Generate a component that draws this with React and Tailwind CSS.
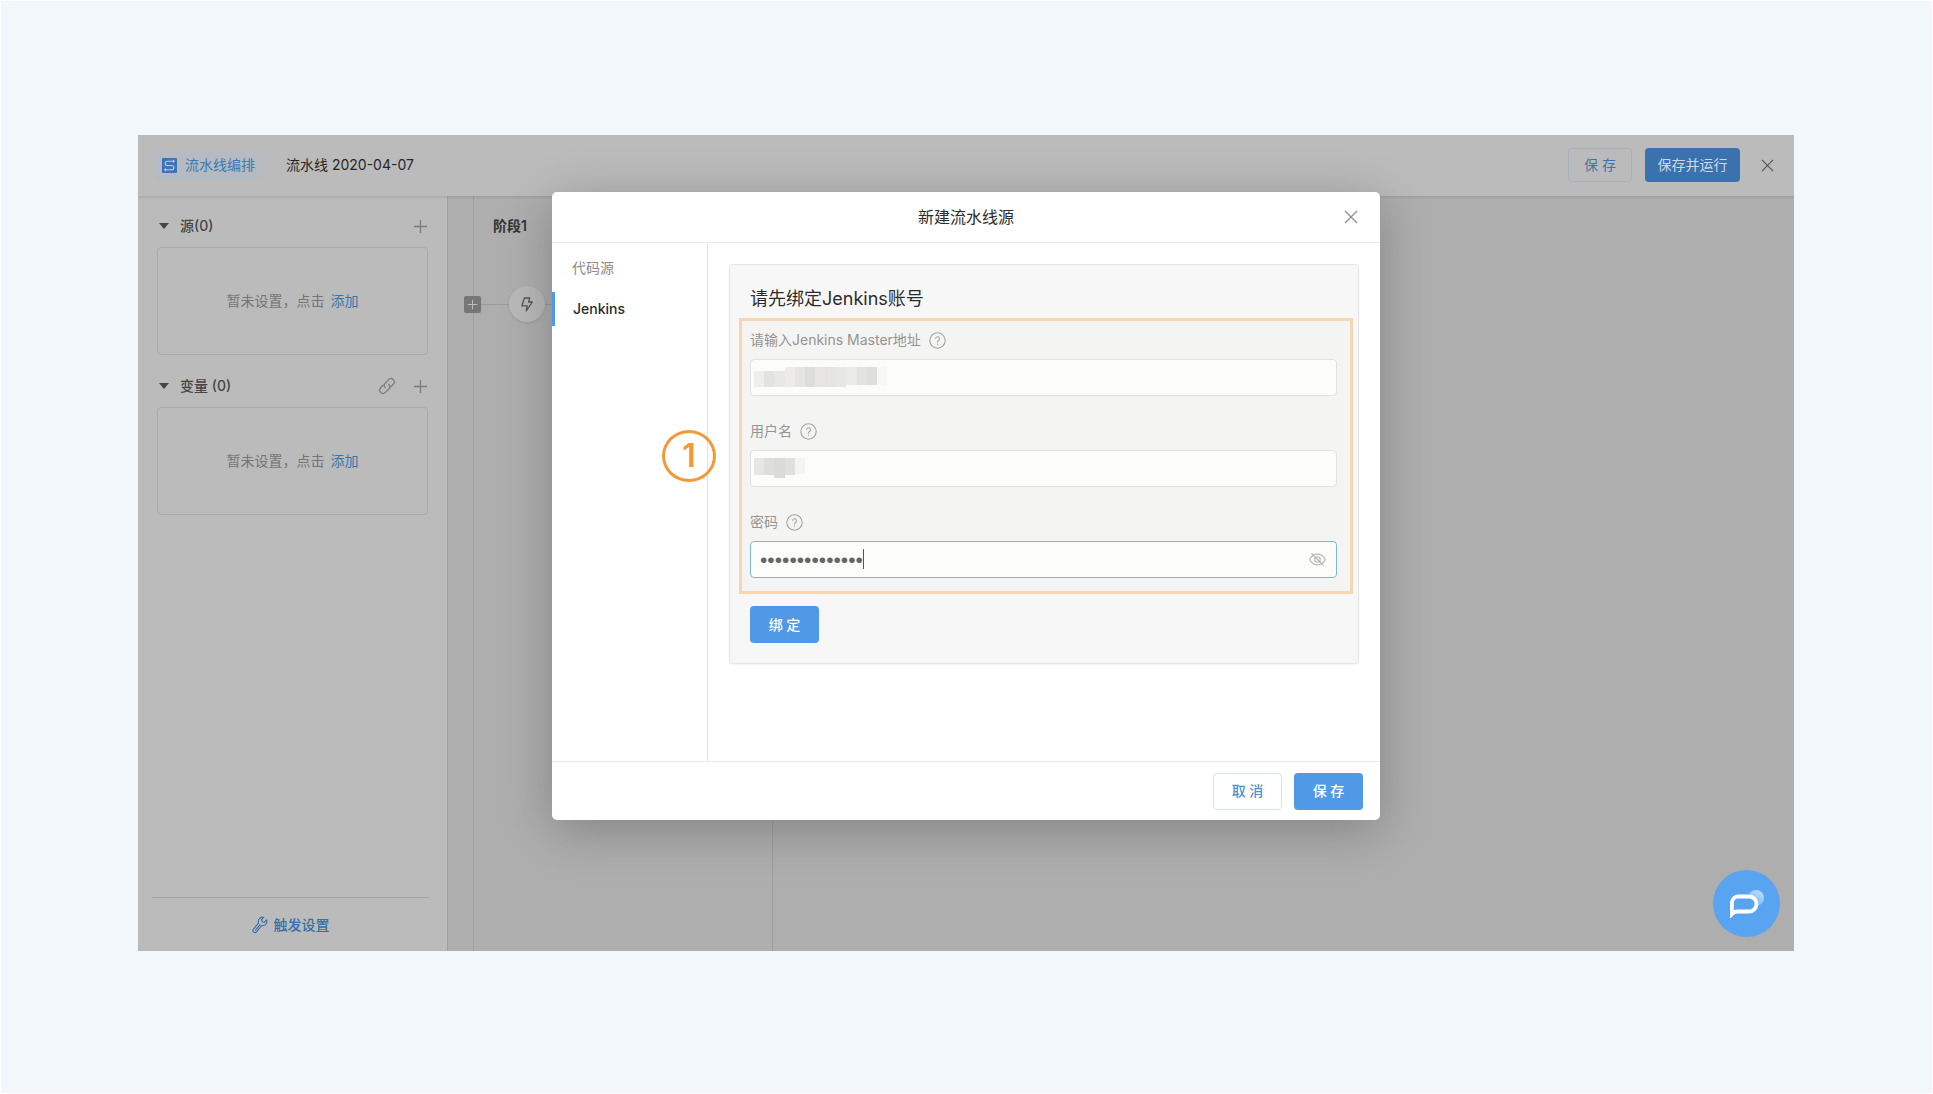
import React, { useState } from "react";

function Plus({ className }) {
  return (
    <svg viewBox="0 0 16 16" className={className} fill="none" stroke="currentColor" strokeWidth="1.4" aria-hidden="true">
      <path d="M8 1v14M1 8h14" />
    </svg>
  );
}

function Close({ className }) {
  return (
    <svg viewBox="0 0 14 14" className={className} fill="none" stroke="currentColor" strokeWidth="1.3" aria-hidden="true">
      <path d="M1 1l12 12M13 1L1 13" />
    </svg>
  );
}

function PipelineMark() {
  return (
    <svg viewBox="0 0 15 15" className="size-[15px]" aria-hidden="true">
      <rect width="15" height="15" rx="1" fill="#3a76b4" />
      <path d="M12 3.200H5.200a2 2 0 0 0-2 2v.3a2 2 0 0 0 2 2h4.600a2 2 0 0 1 2 2v.3a2 2 0 0 1-2 2H3" fill="none" stroke="#c3cdd6" strokeWidth="1.1" />
      <path d="M11 1.500l2.200 1.700L11 4.900zM4 10.100l-2.200 1.700L4 13.500z" fill="#c3cdd6" />
    </svg>
  );
}

function LinkIcon() {
  return (
    <svg viewBox="0 0 18 18" className="size-[18px]" fill="none" stroke="currentColor" strokeWidth="1.3" strokeLinecap="round" aria-hidden="true">
      <path d="M7.2 10.6a3.4 3.4 0 0 1 .2-4.7l3.2-3.3a3.3 3.3 0 0 1 4.7 4.7l-2.400 2.400" />
      <path d="M10.800 7.300a3.400 3.400 0 0 1-.2 4.800l-3.200 3.300a3.300 3.300 0 0 1-4.700-4.700l2.400-2.400" />
    </svg>
  );
}

function Wrench() {
  return (
    <svg viewBox="0 0 16 18" className="h-[18px] w-4" fill="none" stroke="currentColor" strokeWidth="1.1" strokeLinejoin="round" aria-hidden="true">
      <path d="M11.8 1.4a4.2 4.2 0 0 0-5.2 5.5L1.4 13.2a2 2 0 0 0 3.1 2.6l5.1-6.3a4.2 4.2 0 0 0 5-5.6l-2.3 2.5-2.2-.7-.6-2.2z" />
      <path d="M3.2 14.5L8.4 8.3" />
    </svg>
  );
}

function Help({ label }) {
  return (
    <button type="button" aria-label={label} className="text-[#a3a3a2]">
      <svg viewBox="0 0 17 17" className="size-[17px]" fill="none" stroke="currentColor" strokeWidth="1.1" aria-hidden="true">
        <circle cx="8.5" cy="8.5" r="7.7" />
        <path d="M6.5 6.8a2 2 0 1 1 3.1 1.7c-.7.5-1.1.8-1.1 1.6v.3" />
        <path d="M8.5 11.5v1.2" />
      </svg>
    </button>
  );
}

function SideSection({ title, link, className }) {
  return (
    <section className={className}>
      <div className="flex h-10 items-center pb-[2px] pl-[2px]">
        <button type="button" className="flex items-center gap-[11px] text-sm font-medium text-[#454545]">
          <svg viewBox="0 0 10 6" className="h-[6px] w-[10px]" fill="currentColor" aria-hidden="true">
            <path d="M0 0h10L5 6z" />
          </svg>
          {title}
        </button>
        <div className="ml-auto flex items-center gap-[17px] text-[#7b7b7b]">
          {link && <button type="button" aria-label="关联变量"><LinkIcon /></button>}
          <button type="button" aria-label="添加"><Plus className="size-[15px]" /></button>
        </div>
      </div>
      <div className="flex h-[108px] items-center justify-center rounded border border-[#aaaaaa] text-sm text-[#757575]">
        暂未设置，点击<a href="#add" className="ml-[6px] text-[#3677ae]">添加</a>
      </div>
    </section>
  );
}

const MASKED_HOST = [
  { w: "w-[10px]", h: "h-4", c: "bg-[#eeeeec]", m: "mt-1" },
  { w: "w-[10px]", h: "h-4", c: "bg-[#e3e3e1]", m: "mt-1" },
  { w: "w-[11px]", h: "h-4", c: "bg-[#e7e7e5]", m: "mt-1" },
  { w: "w-[10px]", h: "h-5", c: "bg-[#ecebe9]", m: "mt-0" },
  { w: "w-[10px]", h: "h-5", c: "bg-[#e6e5e3]", m: "mt-0" },
  { w: "w-[10px]", h: "h-5", c: "bg-[#dededc]", m: "mt-0" },
  { w: "w-[10px]", h: "h-5", c: "bg-[#e7e6e4]", m: "mt-0" },
  { w: "w-[11px]", h: "h-5", c: "bg-[#e4e4e2]", m: "mt-0" },
  { w: "w-[10px]", h: "h-5", c: "bg-[#e7e7e5]", m: "mt-0" },
  { w: "w-[11px]", h: "h-[18px]", c: "bg-[#ebebe9]", m: "mt-0" },
  { w: "w-[10px]", h: "h-[18px]", c: "bg-[#e3e3e1]", m: "mt-0" },
  { w: "w-[10px]", h: "h-[18px]", c: "bg-[#dfdfdd]", m: "mt-0" },
  { w: "w-[9px]", h: "h-[18px]", c: "bg-[#f7f7f5]", m: "mt-0" },
];

const MASKED_USER = [
  { w: "w-[10px]", h: "h-[17px]", c: "bg-[#e6e6e4]", m: "mt-0" },
  { w: "w-[10px]", h: "h-[17px]", c: "bg-[#dededc]", m: "mt-0" },
  { w: "w-[11px]", h: "h-5", c: "bg-[#dadad8]", m: "mt-0" },
  { w: "w-[10px]", h: "h-[17px]", c: "bg-[#dfdfdd]", m: "mt-0" },
  { w: "w-[10px]", h: "h-4", c: "bg-[#f4f4f2]", m: "mt-0" },
];

function Mask({ blocks }) {
  return (
    <div className="pointer-events-none absolute top-2 left-1 flex items-start" aria-hidden="true">
      {blocks.map((b, i) => (
        <span key={i} className={`${b.w} ${b.h} ${b.c} ${b.m}`} />
      ))}
    </div>
  );
}

function Field({ id, label, children }) {
  return (
    <div>
      <div className="flex h-[26px] items-center gap-2 text-sm text-[#949493]">
        <label htmlFor={id}>{label}</label>
        <Help label={`${label}说明`} />
      </div>
      <div className="relative mt-[6px]">{children}</div>
    </div>
  );
}

const INPUT = "block h-[37px] w-full rounded border border-[#e1e1df] bg-[#fcfcfa] px-[10px] text-sm text-[#666] outline-none";

function Dialog() {
  const [password, setPassword] = useState("abcdefghijklmn");
  return (
    <div role="dialog" aria-labelledby="dialog-title" className="flex w-1/2 flex-col overflow-hidden rounded-[5px] bg-white shadow-[0_10px_50px_rgba(0,0,0,0.25)]">
      <header className="flex h-[51px] items-center border-b border-[#ebebeb] px-[22px]">
        <span className="w-[14px]" />
        <h2 id="dialog-title" className="flex-1 text-center text-base text-[#2c2c2c]">新建流水线源</h2>
        <button type="button" aria-label="关闭" className="text-[#8f8f8f]"><Close className="size-[14px]" /></button>
      </header>
      <div className="flex min-h-[518px]">
        <nav className="w-[156px] shrink-0 border-r border-[#e3e3e3] pt-2 text-sm">
          <p className="flex h-[33px] items-center pl-5 text-[#8c8c8c]">代码源</p>
          <a href="#jenkins" className="mt-2 flex h-[34px] items-center border-l-[3px] border-[#4f99e6] pl-[18px] font-medium text-[#2b2b2b]">Jenkins</a>
        </nav>
        <div className="flex-1 px-[21px] pt-[21px]">
          <section className="rounded border border-[#e6e6e6] bg-[#f7f7f7] px-[9px] pb-5 shadow-[0_1px_2px_rgba(0,0,0,0.05)]">
            <h3 className="flex h-[53px] items-center px-[11px] pt-[14px] text-lg text-[#2d2d2d]">请先绑定Jenkins账号</h3>
            <div className="-mr-1 space-y-[22px] border-[3px] border-[#f6d5b0] bg-[#f4f4f2] pt-[6px] pr-[13px] pb-[13px] pl-2">
              <Field id="host" label="请输入Jenkins Master地址">
                <input id="host" type="text" className={INPUT} />
                <Mask blocks={MASKED_HOST} />
              </Field>
              <Field id="user" label="用户名">
                <input id="user" type="text" className={INPUT} />
                <Mask blocks={MASKED_USER} />
              </Field>
              <Field id="password" label="密码">
                <input
                  id="password"
                  type="password"
                  value={password}
                  onChange={(e) => setPassword(e.target.value)}
                  className="block h-[37px] w-full rounded border border-[#82b4da] bg-[#fcfcfa] px-[9px] font-['Liberation_Sans',sans-serif] text-[21px] text-[#666] outline-none"
                />
                <span className="absolute top-2 left-[113px] h-5 w-px bg-[#555]" aria-hidden="true" />
                <button type="button" aria-label="显示密码" className="absolute top-3 right-[11px] text-[#b5b5b4]">
                  <svg viewBox="0 0 17 13" className="h-[13px] w-[17px]" fill="none" stroke="currentColor" strokeWidth="1.1" aria-hidden="true">
                    <path d="M.7 6.5C2.400 3 5.200 1.100 8.500 1.100s6.100 1.900 7.800 5.400c-1.700 3.500-4.500 5.400-7.800 5.400S2.400 10 .7 6.500z" />
                    <circle cx="8.500" cy="6.500" r="2.700" />
                    <path d="M2.500.5l12 12" />
                  </svg>
                </button>
              </Field>
            </div>
            <button type="button" className="mt-3 ml-[11px] flex h-[37px] w-[69px] items-center justify-center rounded bg-[#4f99e6] text-sm font-medium text-white">绑 定</button>
          </section>
        </div>
      </div>
      <footer className="flex h-[59px] items-center justify-end gap-3 border-t border-[#ebebeb] px-[17px] text-sm font-medium">
        <button type="button" className="h-[37px] w-[69px] rounded border border-[#d3e5f5] text-[#4a92cc]">取 消</button>
        <button type="button" className="h-[37px] w-[69px] rounded bg-[#4f99e6] text-white">保 存</button>
      </footer>
    </div>
  );
}

export default function App() {
  return (
    <main className="min-h-screen border border-white bg-[#f1f7fb] pt-[134px] pr-[138px] pb-10 pl-[137px] font-['Inter','Noto_Sans_CJK_SC',sans-serif]">
      <div className="relative flex min-h-[816px] flex-col overflow-hidden bg-[#aeaeae]">
        <header className="z-0 flex h-[61px] items-center bg-[#bbbbbb] pr-5 pb-px pl-4 text-sm shadow-[0_1px_3px_rgba(0,0,0,0.12)]">
          <a href="#pipeline" className="flex h-[29px] items-center gap-2 rounded bg-[#b5bbc0] pr-[11px] pl-2 text-[#3a7ab5]">
            <PipelineMark />
            流水线编排
          </a>
          <h1 className="ml-5 text-[#262626]">流水线 2020-04-07</h1>
          <div className="ml-auto flex items-center">
            <button type="button" className="h-[34px] w-16 rounded border border-[#a3b2c0] text-[#3a76ad]">保 存</button>
            <button type="button" className="ml-[13px] h-[34px] w-[95px] rounded bg-[#3a72b0] text-[#d0d9e2]">保存并运行</button>
            <button type="button" aria-label="关闭" className="ml-[21px] text-[#555]"><Close className="size-[13px]" /></button>
          </div>
        </header>
        <div className="flex flex-1">
          <aside className="flex w-[310px] shrink-0 flex-col border-r border-[#9f9f9f] bg-[#bbbbbb] px-[19px] pt-[11px]">
            <SideSection title="源(0)" />
            <SideSection title="变量 (0)" link className="mt-3" />
            <div className="-mr-px -ml-[5px] mt-auto flex h-[54px] items-center justify-center border-t border-[#a3a3a3]">
              <button type="button" className="flex items-center gap-[6px] text-sm font-medium text-[#366fa8]">
                <Wrench />
                触发设置
              </button>
            </div>
          </aside>
          <div className="w-[26px] shrink-0 border-r border-[#a0a0a0]" />
          <section className="w-[299px] shrink-0 border-r border-[#9f9f9f]">
            <h2 className="pt-5 pl-[19px] text-sm font-semibold text-[#333]">阶段1</h2>
            <div className="-ml-[10px] mt-[50px] flex items-center">
              <button type="button" aria-label="添加阶段" className="relative flex size-[17px] items-center justify-center rounded-xs bg-[#767676] text-[#bdbdbd]">
                <Plus className="size-[11px]" />
              </button>
              <span className="h-px w-7 bg-[#9a9a9a]" />
              <span className="flex size-9 items-center justify-center rounded-full bg-[#b9b9b9] text-[#555] shadow-sm">
                <svg viewBox="0 0 12 15" className="h-[15px] w-3" fill="none" stroke="currentColor" strokeWidth="1.3" strokeLinejoin="round" aria-hidden="true">
                  <path d="M3.300 1h5.400L7.600 5h3.700l-6.100 9 1-5.200H1z" />
                </svg>
              </span>
              <span className="h-px flex-1 bg-[#9a9a9a]" />
            </div>
          </section>
        </div>

        <div className="absolute inset-0 flex items-start justify-center pt-[57px]">
          <Dialog />
        </div>

        <div className="absolute top-[295px] left-[524px] flex h-[52px] w-[54px] items-center justify-center rounded-[50%] border-[3px] border-[#f19a3a] text-[32px] font-semibold text-[#f19a3a]">
          1
        </div>

        <button type="button" aria-label="在线客服" className="absolute right-[14px] bottom-[14px] flex size-[67px] items-center justify-center rounded-full bg-[#58a4f0]">
          <svg viewBox="0 0 36 28" className="h-7 w-9" aria-hidden="true">
            <defs>
              <linearGradient id="bubble" x1="0.8" y1="0" x2="0.2" y2="1">
                <stop offset="0" stopColor="#c2dffb" />
                <stop offset="1" stopColor="#6aaff3" />
              </linearGradient>
            </defs>
            <circle cx="27" cy="8" r="8" fill="url(#bubble)" />
            <path d="M2.900 24V12.500A6.500 6.500 0 0 1 9.400 6.500H20a7.500 7.500 0 0 1 0 15H8.500Q5 21.600 2.900 24z" fill="#58a4f0" stroke="#fff" strokeWidth="3.800" />
          </svg>
        </button>
      </div>
    </main>
  );
}
